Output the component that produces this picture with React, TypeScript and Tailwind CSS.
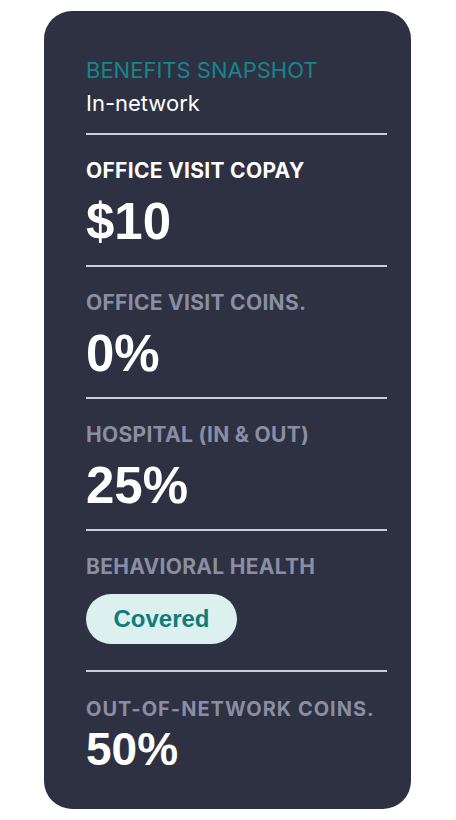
const rows = [
  { label: "OFFICE VISIT COPAY", value: "$10", active: true },
  { label: "OFFICE VISIT COINS.", value: "0%" },
  { label: "HOSPITAL (IN & OUT)", value: "25%" },
];

const arial = "font-['Liberation_Sans',Arial,sans-serif]";

function Divider() {
  return <div className="h-[2px] w-full bg-[#c9cde0]" />;
}

export default function App() {
  return (
    <div className="min-h-[820px] w-[456px] bg-white pt-[11px] font-['Inter',sans-serif]">
      <div className="ml-[44px] flex w-[367px] flex-col rounded-[28px] bg-[#2d3142] pb-[37px] pl-[42px] pr-[24px] pt-[46px]">
        <div className="text-[22px] leading-[26px] text-[#17858c]">BENEFITS SNAPSHOT</div>
        <div className="mt-[7px] text-[22px] leading-[26px] text-white">In-network</div>
        <div className="mt-[17px]">
          <Divider />
        </div>

        {rows.map((r) => (
          <div key={r.label}>
            <div className="pb-[18px] pt-[24px]">
              <div
                className={
                  r.active
                    ? "text-[21px] font-bold leading-[24px] tracking-[0.3px] text-white"
                    : "text-[21px] font-bold leading-[24px] tracking-[0.3px] text-[#8b8ea3]"
                }
              >
                {r.label}
              </div>
              <div className={`${arial} mt-[13px] text-[51px] font-bold leading-[51px] text-white`}>
                {r.value}
              </div>
            </div>
            <Divider />
          </div>
        ))}

        <div className="pb-[26px] pt-[24px]">
          <div className="text-[21px] font-bold leading-[24px] tracking-[0.3px] text-[#8b8ea3]">
            BEHAVIORAL HEALTH
          </div>
          <div
            className={`${arial} mt-[15px] flex h-[50px] w-[151px] items-center justify-center rounded-full bg-[#dcf0f0] text-[24px] font-bold text-[#0e7c7b]`}
          >
            Covered
          </div>
        </div>
        <Divider />

        <div className="pt-[26px]">
          <div className="text-[20px] font-bold leading-[22px] tracking-[1px] text-[#8b8ea3]">
            OUT-OF-NETWORK COINS.
          </div>
          <div className={`${arial} mt-[6px] text-[46px] font-bold leading-[46px] text-white`}>50%</div>
        </div>
      </div>
    </div>
  );
}
